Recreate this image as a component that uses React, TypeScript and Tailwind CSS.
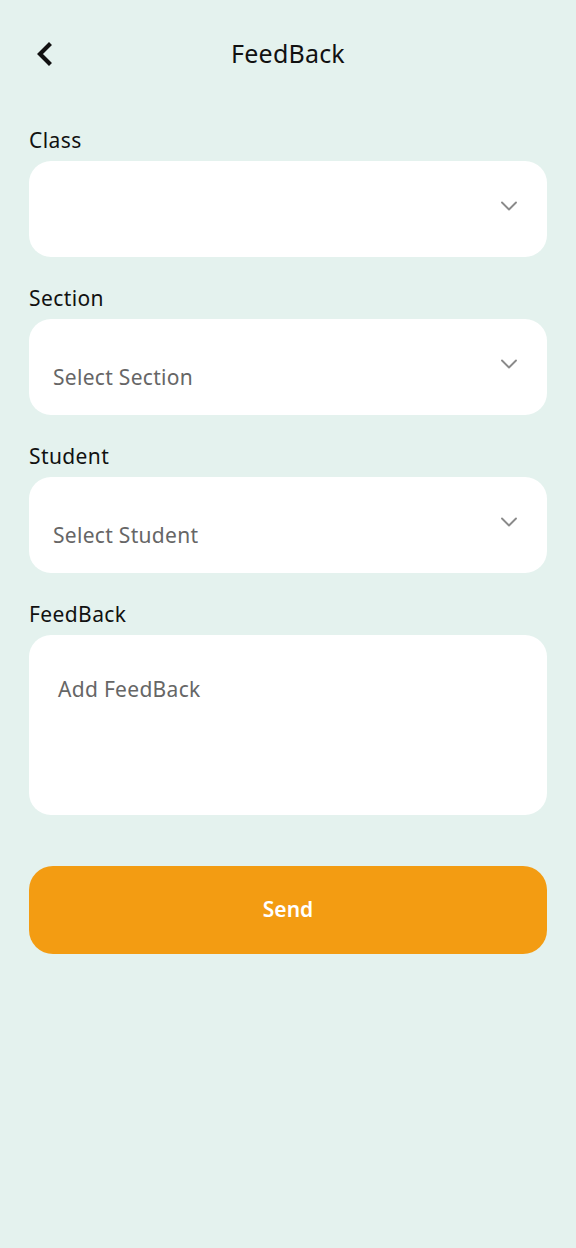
import { ChevronDown } from "lucide-react";

const font = { fontFamily: '"Noto Sans", "Open Sans", sans-serif' };

function SelectBox({ placeholder }: { placeholder?: string }) {
  return (
    <div className="relative h-[96px] rounded-[22px] bg-white">
      {placeholder && (
        <span className="absolute left-[24px] top-[44px] text-[21px] leading-[28px] tracking-[0.3px] text-[#666666]">{placeholder}</span>
      )}
      <ChevronDown size={28} strokeWidth={1.6} className="absolute right-[24px] top-[31px] text-[#8a8a8a]" />
    </div>
  );
}

export default function App() {
  const fields = [
    { label: "Class", placeholder: "" },
    { label: "Section", placeholder: "Select Section" },
    { label: "Student", placeholder: "Select Student" },
  ];

  return (
    <div className="min-h-[1248px] w-full bg-[#e4f2ee] text-[#111111]" style={font}>
      {/* header */}
      <div className="relative flex h-[108px] items-center justify-center pb-[2px]">
        <svg className="absolute left-[34px] top-[42px]" width="20" height="24" viewBox="0 0 20 24" fill="none">
          <path d="M15 3 L6 12 L15 21" stroke="#111" strokeWidth="4.2" strokeLinecap="square" strokeLinejoin="miter" />
        </svg>
        <h1 className="text-[25px] leading-[32px] font-normal tracking-[0.2px]">FeedBack</h1>
      </div>

      <div className="px-[29px] pt-[18px]">
        {fields.map((f) => (
          <div key={f.label} className="mb-[27px] last:mb-[28px]">
            <div className="text-[21px] leading-[28px] tracking-[0.4px] mb-[7px]">{f.label}</div>
            <SelectBox placeholder={f.placeholder} />
          </div>
        ))}

        {/* feedback textarea */}
        <div>
          <div className="text-[21px] leading-[28px] tracking-[0.4px] mb-[7px]">FeedBack</div>
          <div className="h-[180px] rounded-[22px] bg-white px-[29px] pt-[40px]">
            <span className="text-[21px] leading-[28px] tracking-[0.3px] text-[#666666]">Add FeedBack</span>
          </div>
        </div>

        <button className="mt-[51px] flex h-[88px] w-full items-center justify-center rounded-[24px] bg-[#f39c12] text-[21px] font-semibold text-white">
          Send
        </button>
      </div>
    </div>
  );
}
